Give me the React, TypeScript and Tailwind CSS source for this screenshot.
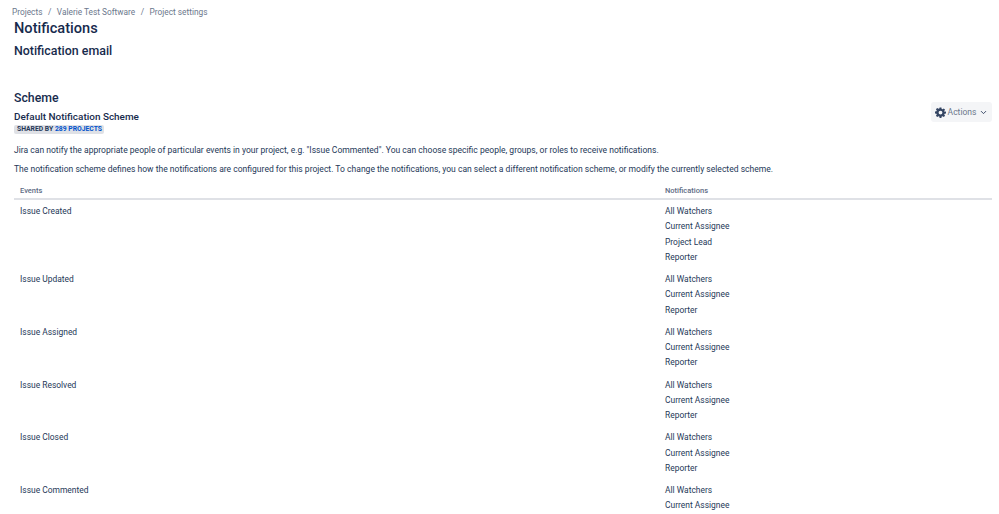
import { ChevronDown } from "lucide-react";

const rows: [string, string[]][] = [
  ["Issue Created", ["All Watchers", "Current Assignee", "Project Lead", "Reporter"]],
  ["Issue Updated", ["All Watchers", "Current Assignee", "Reporter"]],
  ["Issue Assigned", ["All Watchers", "Current Assignee", "Reporter"]],
  ["Issue Resolved", ["All Watchers", "Current Assignee", "Reporter"]],
  ["Issue Closed", ["All Watchers", "Current Assignee", "Reporter"]],
  ["Issue Commented", ["All Watchers", "Current Assignee"]],
];

function Gear() {
  return (
    <svg width="11" height="11" viewBox="0 0 24 24" fill="#344563" fillRule="evenodd">
      <path d="M10 1h4l.6 3.2 1.9.8 2.7-1.9 2.8 2.8-1.9 2.7.8 1.9L24 10v4l-3.1.6-.8 1.9 1.9 2.7-2.8 2.8-2.7-1.9-1.9.8L14 24h-4l-.6-3.1-1.9-.8-2.7 1.9-2.8-2.8 1.9-2.7-.8-1.9L0 14v-4l3.1-.5.8-1.9L2 4.900l2.800-2.800 2.700 1.900 1.900-.8L10 1zm2 7a4.200 4.200 0 1 0 0 8.400A4.200 4.200 0 0 0 12 8z" />
    </svg>
  );
}

export default function App() {
  return (
    <div className="h-[514px] w-[999px] overflow-hidden bg-white pl-[14px] pr-[7px] font-['Roboto','Noto_Sans',sans-serif] text-[#253858]">
      <nav className="-ml-[2px] flex h-[24px] items-center gap-[5.500px] text-[8.300px] leading-[24px] text-[#6b778c]">
        <span>Projects</span>
        <span>/</span>
        <span>Valerie Test Software</span>
        <span>/</span>
        <span>Project settings</span>
      </nav>
      <h1 className="h-[20px] text-[14.600px] leading-[8px] font-medium text-[#172b4d]">Notifications</h1>
      <h2 className="-mt-[3px] h-[47px] text-[12.400px] leading-[20px] font-medium text-[#172b4d]">Notification email</h2>
      <h2 className="h-[22px] text-[12.300px] leading-[20px] font-medium text-[#172b4d]">Scheme</h2>
      <div className="flex items-start justify-between">
        <div>
          <h3 className="text-[9.950px] leading-[13px] font-medium text-[#172b4d]">Default Notification Scheme</h3>
          <div className="mt-[2px] flex h-[9px] w-[90px] items-center justify-center rounded-[2px] bg-[#dfe1e6] pl-[1px] text-[6.800px] font-bold text-[#253858]">
            <span>SHARED BY <span className="text-[#0052cc]">289 PROJECTS</span></span>
          </div>
        </div>
        <button className="-mt-[8px] flex h-[20px] w-[61px] items-center justify-center gap-[2px] rounded-[3px] bg-[#f4f5f7] text-[8.500px] text-[#6b778c]">
          <Gear />
          <span>Actions</span>
          <ChevronDown size={9} strokeWidth={2.5} className="ml-[1px] text-[#344563]" />
        </button>
      </div>
      <p className="mt-[8px] text-[8.550px] leading-[16px]">
        Jira can notify the appropriate people of particular events in your project, e.g. "Issue Commented". You can choose specific people, groups, or roles to receive notifications.
      </p>
      <p className="mt-[3px] text-[8.550px] leading-[16px]">
        The notification scheme defines how the notifications are configured for this project. To change the notifications, you can select a different notification scheme, or modify the currently selected scheme.
      </p>
      <table className="mt-[7px] w-[978px] table-fixed border-collapse text-[8.450px]">
        <colgroup>
          <col className="w-[645px]" />
          <col />
        </colgroup>
        <thead>
          <tr className="border-b-2 border-[#dfe1e6] text-left text-[7.500px] text-[#5e6c84]">
            <th className="h-[15px] pl-[6px] font-medium">Events</th>
            <th className="h-[15px] pl-[6px] font-medium">Notifications</th>
          </tr>
        </thead>
        <tbody>
          {rows.map(([event, list]) => (
            <tr key={event} className="align-top">
              <td className="pl-[6px] pt-[4px] pb-[2.850px] leading-[15.300px]">{event}</td>
              <td className="pl-[6px] pt-[4px] pb-[2.850px] leading-[15.300px]">
                {list.map((n) => (
                  <div key={n}>{n}</div>
                ))}
              </td>
            </tr>
          ))}
        </tbody>
      </table>
    </div>
  );
}
